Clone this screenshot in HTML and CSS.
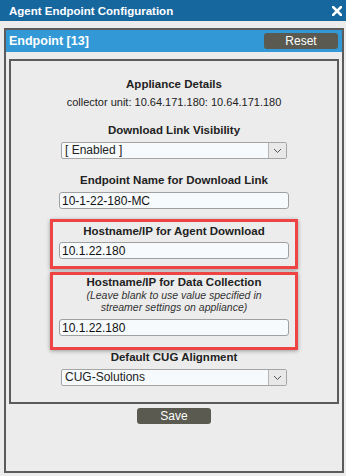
FILE: index.html
```html
<!DOCTYPE html>
<html lang="en">
<head>
    <meta charset="UTF-8">
    <title>Agent Endpoint Configuration</title>
    <link rel="stylesheet" href="styles.css">
</head>
<body>

<div class="titlebar">
    <span class="title">Agent Endpoint Configuration</span>
    <svg class="close" width="10" height="10" viewBox="0 0 10 10">
        <path d="M1 1 L9 9 M9 1 L1 9" stroke="#fff" stroke-width="2.6" stroke-linecap="square"/>
    </svg>
</div>

<div class="panel">
    <div class="panel-head">
        <span>Endpoint [13]</span>
        <button class="btn reset">Reset</button>
    </div>

    <div class="inner">
        <div class="label">Appliance Details</div>
        <div class="text">collector unit: 10.64.171.180: 10.64.171.180</div>

        <div class="label gap">Download Link Visibility</div>
        <div class="select">
            <span class="value">[ Enabled ]</span>
            <span class="arrow">
                <svg width="9" height="6" viewBox="0 0 9 6"><path d="M1 1 L4.5 4.5 L8 1" fill="none" stroke="#555" stroke-width="1"/></svg>
            </span>
        </div>

        <div class="label gap">Endpoint Name for Download Link</div>
        <input class="field" type="text" value="10-1-22-180-MC">

        <div class="highlight first">
            <div class="label">Hostname/IP for Agent Download</div>
            <input class="field" type="text" value="10.1.22.180">
        </div>

        <div class="highlight second">
            <div class="label">Hostname/IP for Data Collection</div>
            <div class="note">(Leave blank to use value specified in<br>streamer settings on appliance)</div>
            <input class="field" type="text" value="10.1.22.180">
        </div>

        <div class="label">Default CUG Alignment</div>
        <div class="select">
            <span class="value">CUG-Solutions</span>
            <span class="arrow">
                <svg width="9" height="6" viewBox="0 0 9 6"><path d="M1 1 L4.5 4.5 L8 1" fill="none" stroke="#555" stroke-width="1"/></svg>
            </span>
        </div>
    </div>

    <div class="actions">
        <button class="btn save">Save</button>
    </div>
</div>

</body>
</html>
```

FILE: styles.css
```css
body {
    margin: 0;
    background-color: #ececec;
    font-family: "Liberation Sans", Arial, sans-serif;
    font-size: 11px;
    color: #222;
    width: 346px;
    height: 476px;
    overflow: hidden;
}
.titlebar {
    height: 21px;
    background-color: #17679f;
    color: white;
    display: flex;
    align-items: center;
    justify-content: space-between;
    padding: 0 4px 0 9px;
}
.title {
    font-weight: bold;
    font-size: 11.5px;
}
.panel {
    margin: 7px 2px 0 4px;
    height: 441px;
    border: 2px solid #5b5b5b;
    display: flex;
    flex-direction: column;
}
.panel-head {
    height: 22px;
    background-color: #3399d6;
    color: white;
    font-weight: bold;
    font-size: 12.5px;
    display: flex;
    align-items: center;
    justify-content: space-between;
    padding: 0 4px 0 3px;
}
.btn {
    background-color: #5a5a50;
    color: white;
    border: none;
    border-radius: 3px;
    font-family: "Liberation Sans", Arial, sans-serif;
    font-size: 12px;
    padding: 0;
    height: 16px;
    width: 74px;
}
.inner {
    margin: 7px 3px 0 3px;
    border: 2px solid #5b5b5b;
    display: flex;
    flex-direction: column;
    align-items: center;
    padding-top: 16px;
    box-sizing: border-box;
    height: 345px;
}
.label {
    font-weight: bold;
    font-size: 11.5px;
    line-height: 14px;
    text-align: center;
}
.label.gap {
    margin-top: 14px;
}
.text {
    line-height: 14px;
    margin-top: 4px;
}
.select {
    margin-top: 5px;
    width: 226px;
    height: 17px;
    box-sizing: border-box;
    border: 1px solid #a5a5a5;
    border-radius: 2px;
    background-color: #f7fafc;
    display: flex;
    font-size: 12px;
}
.select .value {
    flex: 1;
    line-height: 15px;
    padding-left: 3px;
}
.select .arrow {
    width: 17px;
    border-left: 1px solid #b5b5b5;
    background-color: #e8e8e8;
    display: flex;
    align-items: center;
    justify-content: center;
}
.field {
    margin: 5px 0 0 0;
    width: 230px;
    height: 17px;
    box-sizing: border-box;
    border: 1px solid #a0a0a0;
    border-radius: 3px;
    background-color: #f7fafc;
    font-family: "Liberation Sans", Arial, sans-serif;
    font-size: 12px;
    color: #111;
    padding: 0 2px;
}
.highlight {
    width: 248px;
    box-sizing: border-box;
    border: 3px solid #ef4444;
    box-shadow: 0 1px 4px rgba(0, 0, 0, 0.35);
    display: flex;
    flex-direction: column;
    align-items: center;
}
.highlight.first {
    margin-top: 10px;
    height: 50px;
    padding-top: 2px;
}
.highlight.first .field {
    margin-top: 4px;
}
.highlight.second {
    margin-top: 3px;
    height: 78px;
    padding-top: 0;
}
.note {
    font-style: italic;
    font-size: 10.5px;
    line-height: 12px;
    text-align: center;
    color: #333;
}
.highlight.second .field {
    margin-top: 6px;
}
.actions {
    display: flex;
    justify-content: center;
    padding-top: 4px;
}
```
